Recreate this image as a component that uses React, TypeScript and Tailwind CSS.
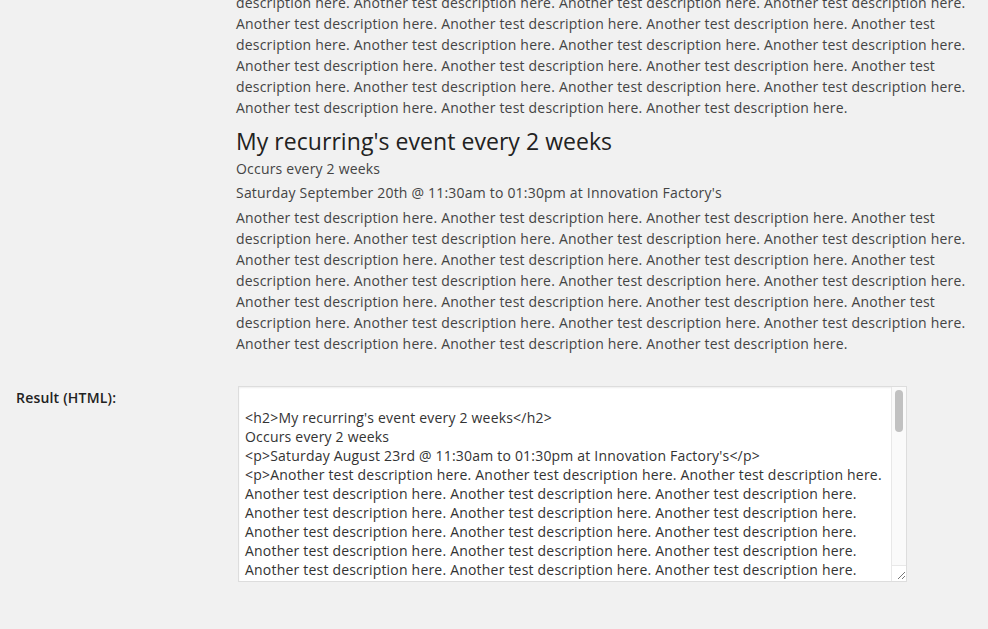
import React from "react";

const S = "Another test description here.";
const para = Array.from({ length: 24 }, () => S).join(" ");

function Grip() {
  return (
    <svg width="15" height="15" viewBox="0 0 15 15" className="block">
      <g fill="#777">
        <rect x="12" y="6" width="1" height="1" />
        <rect x="11" y="7" width="1" height="1" />
        <rect x="10" y="8" width="1" height="1" />
        <rect x="9" y="9" width="1" height="1" />
        <rect x="8" y="10" width="1" height="1" />
        <rect x="7" y="11" width="1" height="1" />
        <rect x="6" y="12" width="1" height="1" />
        <rect x="12" y="10" width="1" height="1" />
        <rect x="11" y="11" width="1" height="1" />
        <rect x="10" y="12" width="1" height="1" />
      </g>
    </svg>
  );
}

export default function App() {
  const taLines: string[] = [
    "",
    "<h2>My recurring's event every 2 weeks</h2>",
    "Occurs every 2 weeks",
    "<p>Saturday August 23rd @ 11:30am to 01:30pm at Innovation Factory's</p>",
    "<p>" + para + "</p>",
  ];
  return (
    <div
      className="h-[629px] w-[988px] overflow-hidden bg-[#f1f1f1] text-[14px] tracking-[0.2px] text-[#444]"
      style={{ fontFamily: '"Open Sans", "Liberation Sans", sans-serif' }}
    >
      <div className="flex">
        <div className="w-[236px] shrink-0" />
        <div className="w-[750px]">
          <p className="mt-[-29px] leading-[21px]">{para}</p>
          <h2 className="mt-[9px] text-[23px] leading-[29px] tracking-[0.05px] text-[#222]">
            My recurring's event every 2 weeks
          </h2>
          <div className="mt-[2px] leading-[21px]">Occurs every 2 weeks</div>
          <p className="mt-[3px] leading-[21px]">
            Saturday September 20th @ 11:30am to 01:30pm at Innovation Factory's
          </p>
          <p className="mt-[4px] leading-[21px]">{para}</p>
        </div>
      </div>

      <div className="mt-[32px] flex">
        <div className="w-[238px] shrink-0 pl-[16px] pt-[1px] font-semibold leading-[21px] text-[#222]">
          Result (HTML):
        </div>
        <div className="relative h-[196px] w-[669px] overflow-hidden border border-[#dddddd] bg-white shadow-[inset_0_1px_2px_rgba(0,0,0,0.07)]">
          <div className="w-[660px] whitespace-pre-wrap px-[6px] pt-[2px] leading-[19px] text-[#333]">
            {taLines.join("\n")}
          </div>
          <div className="absolute bottom-0 right-0 top-0 flex w-[15px] flex-col border-l border-[#e8e8e8] bg-[#fafafa]">
            <div className="ml-[3px] mt-[3px] h-[42px] w-[8px] rounded-full bg-[#c1c1c1]" />
            <div className="flex-1" />
            <div className="border-t border-[#e8e8e8] bg-white">
              <Grip />
            </div>
          </div>
        </div>
      </div>
    </div>
  );
}
